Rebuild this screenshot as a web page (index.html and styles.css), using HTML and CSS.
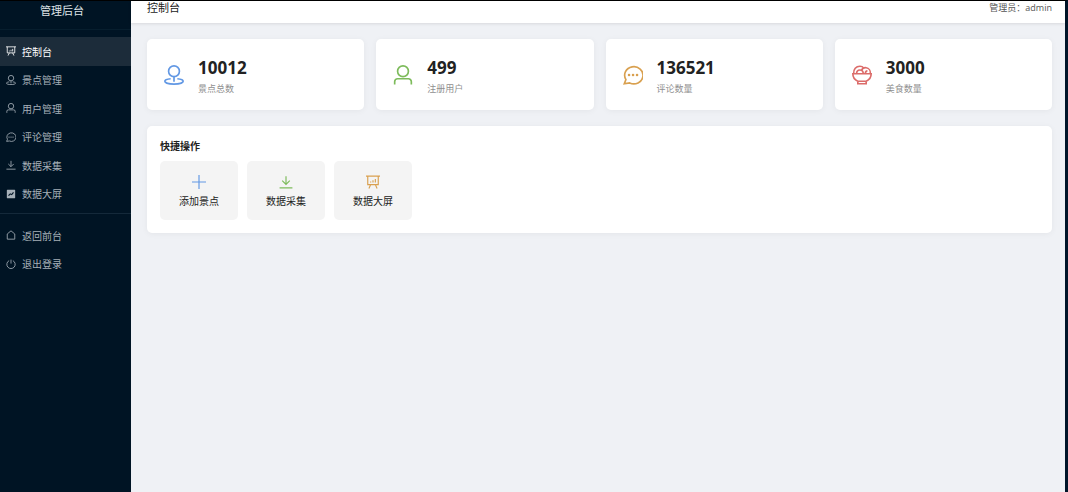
FILE: index.html
```html
<!DOCTYPE html>
<html lang="zh-CN">
<head>
    <meta charset="UTF-8">
    <meta name="viewport" content="width=device-width, initial-scale=1.0">
    <title>管理后台</title>
    <link rel="stylesheet" href="styles.css">
</head>
<body>
    <!-- Shared icons -->
    <svg class="sprite" aria-hidden="true">
        <symbol id="icon-board" viewBox="0 0 24 24">
            <path d="M0 2h24M3 2v14.500h18V2M8 16.500L5 23M16 16.500l3 6.500M8 13v-2M12 13V9M16 13V7"/>
        </symbol>
        <symbol id="icon-place" viewBox="0 0 24 24">
            <circle cx="12" cy="7.500" r="6.500"/>
            <path d="M12 14v6M8 16.500c-4 .3-7 1.500-7 3.100 0 2 5 3.400 11 3.400s11-1.400 11-3.400c0-1.600-3-2.800-7-3.100"/>
        </symbol>
        <symbol id="icon-user" viewBox="0 0 24 24">
            <circle cx="12" cy="7.500" r="6.500"/>
            <path d="M2 23.500V20a3.500 3.500 0 0 1 3.500-3.500h13A3.500 3.500 0 0 1 22 20v3.500"/>
        </symbol>
        <symbol id="icon-chat" viewBox="0 0 24 24">
            <path d="M3.500 17.500A11 10.300 0 1 1 8 21.500L1.500 22.500z"/>
            <path class="dots" d="M7.200 12h.1M12 12h.1M16.800 12h.1"/>
        </symbol>
        <symbol id="icon-download" viewBox="0 0 24 24">
            <path d="M12 2v14M5.500 9.500L12 16l6.500-6.500M1 22h22"/>
        </symbol>
        <symbol id="icon-chart" viewBox="0 0 24 24">
            <path class="solid" fill-rule="evenodd" d="M3 2h18q1 0 1 1v18q0 1-1 1H3q-1 0-1-1V3q0-1 1-1zM5 15l2 2 4-4 3 2 5-6-2-2-4 5-3-2z"/>
        </symbol>
        <symbol id="icon-home" viewBox="0 0 24 24">
            <path d="M3 9.500L12 2l9 7.500V22H3z"/>
        </symbol>
        <symbol id="icon-power" viewBox="0 0 24 24">
            <path d="M12 1.500V11M7.500 4a10 10 0 1 0 9 0"/>
        </symbol>
        <symbol id="icon-plus" viewBox="0 0 24 24">
            <path d="M12 0v24M0 12h24"/>
        </symbol>
        <symbol id="icon-food" viewBox="0 0 24 24">
            <path d="M1 10.500h22c0 4.500-2.500 7.500-6 9H7c-3.500-1.500-6-4.500-6-9zM7 19.500v3h10v-3M2 10.500C1.500 5 5 1.500 9.500 1.500c2 0 3.500.7 4.500 2M5.500 10.500C5.500 7.500 7 6 9.500 6s4 1.500 4 4.500M11.500 6.500C12.500 4 14.500 3 17 3.300c3 .4 5.500 3.200 5 7.200M16 10.500c0-2 .5-3.500 2.500-3.500"/>
        </symbol>
    </svg>

    <div class="layout">
        <aside class="sidebar">
            <div class="logo">管理后台</div>
            <nav>
                <ul class="menu menu-main">
                    <li><a href="#" class="active" aria-current="page"><svg class="icon"><use href="#icon-board"/></svg>控制台</a></li>
                    <li><a href="#"><svg class="icon"><use href="#icon-place"/></svg>景点管理</a></li>
                    <li><a href="#"><svg class="icon"><use href="#icon-user"/></svg>用户管理</a></li>
                    <li><a href="#"><svg class="icon"><use href="#icon-chat"/></svg>评论管理</a></li>
                    <li><a href="#"><svg class="icon"><use href="#icon-download"/></svg>数据采集</a></li>
                    <li><a href="#"><svg class="icon"><use href="#icon-chart"/></svg>数据大屏</a></li>
                </ul>
                <ul class="menu menu-extra">
                    <li><a href="#"><svg class="icon"><use href="#icon-home"/></svg>返回前台</a></li>
                    <li><a href="#"><svg class="icon"><use href="#icon-power"/></svg>退出登录</a></li>
                </ul>
            </nav>
        </aside>

        <div class="page">
            <header class="header">
                <h1>控制台</h1>
                <span class="admin">管理员：admin</span>
            </header>

            <main class="content">
                <section class="stats">
                    <div class="card stat">
                        <svg class="icon blue"><use href="#icon-place"/></svg>
                        <div class="stat-text">
                            <div class="stat-value">10012</div>
                            <div class="stat-label">景点总数</div>
                        </div>
                    </div>
                    <div class="card stat">
                        <svg class="icon green"><use href="#icon-user"/></svg>
                        <div class="stat-text">
                            <div class="stat-value">499</div>
                            <div class="stat-label">注册用户</div>
                        </div>
                    </div>
                    <div class="card stat">
                        <svg class="icon orange"><use href="#icon-chat"/></svg>
                        <div class="stat-text">
                            <div class="stat-value">136521</div>
                            <div class="stat-label">评论数量</div>
                        </div>
                    </div>
                    <div class="card stat">
                        <svg class="icon red"><use href="#icon-food"/></svg>
                        <div class="stat-text">
                            <div class="stat-value">3000</div>
                            <div class="stat-label">美食数量</div>
                        </div>
                    </div>
                </section>

                <section class="card quick">
                    <h2>快捷操作</h2>
                    <div class="actions">
                        <button type="button"><svg class="icon blue"><use href="#icon-plus"/></svg>添加景点</button>
                        <button type="button"><svg class="icon green"><use href="#icon-download"/></svg>数据采集</button>
                        <button type="button"><svg class="icon orange"><use href="#icon-board"/></svg>数据大屏</button>
                    </div>
                </section>
            </main>
        </div>
    </div>
</body>
</html>
```

FILE: styles.css
```css
* {
    box-sizing: border-box;
    margin: 0;
    padding: 0;
}

body {
    font-family: "Open Sans", "Noto Sans CJK SC", sans-serif;
    font-size: 10px;
    color: #222;
    background-color: #eff1f5;
}

.sprite {
    display: none;
}

.icon {
    flex: none;
    fill: none;
    stroke: currentColor;
    stroke-width: 2;
}

.dots {
    stroke-width: 3;
    stroke-linecap: round;
}

.solid {
    fill: currentColor;
    stroke: none;
}

.blue { color: #6298e4; }
.green { color: #7dbb5b; }
.orange { color: #d9a04f; }
.red { color: #dc6c6a; }

.layout {
    display: flex;
    min-height: 100vh;
    border-top: 1px solid #000;
    border-right: 3px solid #001529;
}

/* Sidebar */
.sidebar {
    flex: none;
    width: 131px;
    background-color: #001424;
}

.logo {
    height: 29px;
    padding: 1px 7px 0 0;
    border-bottom: 1px solid #071e2e;
    font-size: 11px;
    line-height: 18px;
    text-align: center;
    color: #dfe4e8;
}

.menu {
    display: grid;
    grid-auto-rows: 1fr;
    list-style: none;
}

.menu-main {
    height: 171px;
    margin-top: 7px;
}

.menu-extra {
    height: 65px;
    margin-top: 5px;
    padding-top: 7px;
    border-top: 1px solid #14293a;
}

.menu a {
    display: flex;
    align-items: center;
    gap: 6px;
    height: 100%;
    padding-left: 6px;
    color: #a6b0b8;
    text-decoration: none;
}

.menu .icon {
    width: 10px;
    height: 10px;
}

.menu a:hover,
.menu a.active {
    color: #fff;
    background-color: #1c2c3a;
}

/* Header */
.page {
    flex: 1;
    min-width: 0;
}

.header {
    display: flex;
    justify-content: space-between;
    height: 22px;
    padding: 0 13px 0 16px;
    background-color: #fff;
    box-shadow: 0 1px 3px rgba(0, 0, 0, 0.1);
}

.header h1 {
    font-size: 11px;
    font-weight: 400;
    line-height: 13px;
}

.admin {
    font-size: 9px;
    line-height: 13px;
    color: #555;
}

/* Content */
.content {
    padding: 16px 13px 16px 16px;
}

.card {
    background-color: #fff;
    border-radius: 5px;
    box-shadow: 0 1px 6px rgba(0, 0, 0, 0.05);
}

.stats {
    display: grid;
    grid-template-columns: repeat(4, 1fr);
    gap: 12px;
    margin-bottom: 16px;
}

.stat {
    display: flex;
    align-items: center;
    gap: 14px;
    height: 71px;
    padding: 0 17px;
}

.stat .icon {
    width: 20px;
    height: 20px;
}

.stat-text {
    padding-top: 5px;
}

.stat-value {
    font-size: 17px;
    font-weight: 700;
    line-height: 24px;
}

.stat-label {
    font-size: 9px;
    line-height: 18px;
    color: #8f8f8f;
}

.quick {
    padding: 13px;
}

.quick h2 {
    margin-bottom: 7px;
    font-size: 10px;
    font-weight: 700;
    line-height: 15px;
}

.actions {
    display: flex;
    gap: 9px;
}

.actions button {
    display: flex;
    flex-direction: column;
    align-items: center;
    gap: 5px;
    width: 78px;
    padding: 14px 0 11px;
    border: none;
    border-radius: 5px;
    background-color: #f4f4f4;
    color: #222;
    font-family: inherit;
    font-size: 10px;
    line-height: 15px;
    cursor: pointer;
}

.actions button:hover {
    background-color: #ececec;
}

.actions .icon {
    width: 14px;
    height: 14px;
}
```
